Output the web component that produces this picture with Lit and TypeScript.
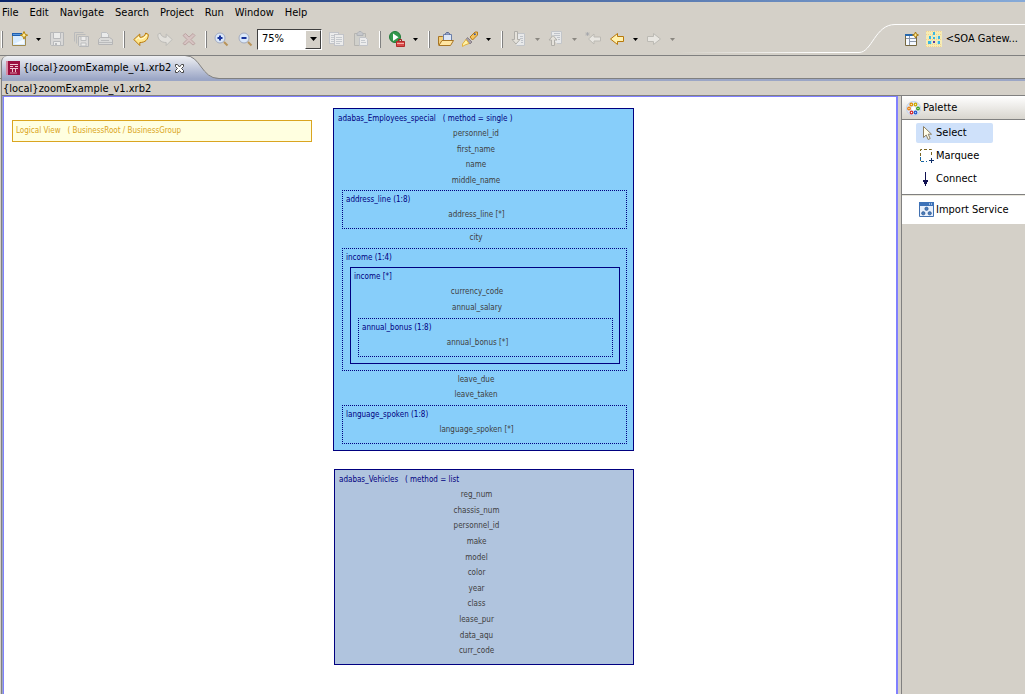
import { LitElement, html, svg, css, nothing, type TemplateResult } from "lit";
import { customElement, property, state } from "lit/decorators.js";
import { classMap } from "lit/directives/class-map.js";

type Tool = {
  kind: "button" | "menu" | "separator" | "tight" | "zoom";
  icon?: string;
  label?: string;
  disabled?: boolean;
};

type Item = string | Group;
type Group = { title: string; solid?: boolean; items: Item[] };

const page = (x: number, y: number) => svg`
  <rect x="${x + 0.5}" y="${y + 0.5}" width="9" height="11" fill="#f1f2f3" stroke="#bfc3ca"/>
  <path d="M${x + 2} ${y + 3.5}h6M${x + 2} ${y + 5.5}h6M${x + 2} ${y + 7.5}h6M${x + 2} ${y + 9.5}h4" stroke="#c3c8d0"/>`;

const ICONS: Record<string, unknown> = {
  new: svg`
    <path d="M.5 3.500h13v11H.5z" fill="#d8ecff" stroke="#a08a50"/>
    <path d="M2 13h10V8z" fill="#f6fbff"/>
    <path d="M0 2h10v3H0z" fill="#1f5fb0"/><path d="M1 3.500h8" stroke="#5b9be0"/>
    <path d="M12 .5l1.200 2.800 2.500.9-2.500.9-1.200 3.100-1.200-3.100-2.500-.9 2.500-.9z" fill="#fff0a0" stroke="#b8860b"/>`,
  save: svg`
    <path d="M1.500 1.500h13v13h-12l-1-1z" fill="#dadada" stroke="#b1b3b6"/>
    <path d="M4.500 1.500h7v6h-7zM4.500 10.500h7v4h-7z" fill="#f0f0f0" stroke="#b5b7ba"/><path d="M6 12h2v2H6z" fill="#b5b7ba"/>`,
  saveAll: svg`
    <path d="M1.500 10.500v-9h9M3.500 12.500v-9h9" fill="none" stroke="#b6b8ba"/>
    <path d="M5.500 5.500h10v10h-9l-1-1z" fill="#dedede" stroke="#b1b3b6"/>
    <path d="M8 5.500h5v4H8zM8 12h5v3H8z" fill="#f2f2f2" stroke="#b8babd"/>`,
  print: svg`
    <path d="M4.500 7.500v-6h5l2 2v4" fill="#eef0f2" stroke="#bbbec2"/>
    <path d="M1.500 8.500l2-2h9l3 2v5h-14z" fill="#dcdcdc" stroke="#b0b1b3"/>
    <path d="M4 9.500h8M2 11.500h13" stroke="#b6b8bb"/>`,
  undo: svg`<path d="M.8 8.500l6-5.500v3.300c3 .2 5-1.300 6-4.300l2.500 1.500c0 5-3 8-8.500 8v3z" fill="#ffe68c" stroke="#b8780a"/><path d="M3 8.500l3-2.500v2c3 .2 6-1 8-4" fill="none" stroke="#fffbdc"/>`,
  redo: svg`<path d="M15.200 8.500l-6-5.500v3.300c-3 .2-5-1.300-6-4.300L.8 3.500c0 5 3 8 8.400 8v3z" fill="#e5e3df" stroke="#b9b8b5"/>`,
  remove: svg`<path d="M2 4.500l2.500-2L8 6l4-3.500L14 4.500 10 8.500l4 4-2 1.500-4-3.500-4 3.500-2-1.500 4-4z" fill="#d7c1c1" stroke="#b99d9d"/>`,
  zoomIn: svg`<circle cx="7" cy="7" r="5" fill="#dbe8f9" stroke="#a3abc0"/><path d="M11 11l3.500 3.500" stroke="#b8935a" stroke-width="2"/><path d="M4.500 7h5M7 4.500v5" stroke="#17339c" stroke-width="2"/>`,
  zoomOut: svg`<circle cx="7" cy="7" r="5" fill="#dbe8f9" stroke="#a3abc0"/><path d="M11 11l3.500 3.500" stroke="#b8935a" stroke-width="2"/><path d="M4.500 7h5" stroke="#17339c" stroke-width="2"/>`,
  copy: svg`${page(0, 1)}${page(5, 3)}`,
  paste: svg`
    <path d="M1.500 2.500h11v12h-11z" fill="#d0d0cc" stroke="#b1b1ad"/><path d="M4 4.500v-2l2-2h2l2 2v2z" fill="#c3c6cc" stroke="#a9adb4"/>
    <path d="M6.500 6.500h6l2 2v6h-8z" fill="#f1f2f3" stroke="#bfc3ca"/><path d="M8 9.500h4M8 11.500h5" stroke="#c3c8d0"/>`,
  run: svg`
    <circle cx="6" cy="6" r="5.500" fill="#33984c" stroke="#207a39"/><path d="M4 2.500v7.500L9.500 6.200z" fill="#fff"/>
    <path d="M9.500 10.500v-2h3v2" fill="none" stroke="#a02020"/><path d="M7.500 10.500h8v5h-8z" fill="#d94a4a" stroke="#b02a2a"/><path d="M8 12.500h7" stroke="#f5b0a8"/>`,
  open: svg`
    <path d="M.5 13.500v-8h4l1 1h6v7z" fill="#f3cf7c" stroke="#a87523"/>
    <path d="M5.500 9V3.500h8V9" fill="#dce6f6" stroke="#6b7ea8"/><path d="M7.500 3.500v-1l1-1h2l1 1v1" fill="#8fa0c8" stroke="#59698e"/>
    <path d="M.8 14.500l3.200-5h11.500l-3 5z" fill="#ffe6a2" stroke="#a87523"/>`,
  torch: svg`
    <path d="M8 6l5-5h2.500v3L10.500 9z" fill="#f5c35c" stroke="#b57a1a"/><circle cx="12.800" cy="3.300" r="1" fill="#3757a5"/>
    <path d="M5.500 6.500l4.500 4.500-2 2L4 8.500z" fill="#a7a0a6" stroke="#888089"/>
    <path d="M4 8.500L.5 13v2.500L3 14l4-1.500z" fill="#fff3a6" stroke="#e0b040"/>`,
  nextMark: svg`
    <path d="M3.500 2.500h10v12h-8" fill="#eceef0" stroke="#c0c4ca"/><path d="M9 5.500h3M9 7.500h3M10 9.500h2M10 11.500h2" stroke="#bcc1ca"/>
    <path d="M3.500.5h3v8H9l-4 4.500L1 8.500h2.500z" fill="#e8e6df" stroke="#aaa9a4"/>`,
  prevMark: svg`
    <path d="M3.500 8V.5h10v12H9" fill="#eceef0" stroke="#c0c4ca"/><path d="M6 2.500h6M6 4.500h6M9 6.500h3M10 8.500h2" stroke="#bcc1ca"/>
    <path d="M3.500 14.500h3V9H9L5 4.500 1 9h2.500z" fill="#e8e6df" stroke="#aaa9a4"/>`,
  lastEdit: svg`
    <path d="M15.500 6v4H9v3L3.500 8 9 3v3z" fill="#ecebe6" stroke="#b8b7b1"/>
    <path d="M2.500 1v4M.5 3h4M1 1.500l3 3M4 1.500l-3 3" stroke="#9a9da6" stroke-width=".7"/>`,
  back: svg`<path d="M14.500 5.500v5h-6v3L1.500 8l7-5.500v3z" fill="#fff1ae" stroke="#b8780a"/>`,
  forward: svg`<path d="M1.500 5.500v5h6v3L14.500 8l-7-5.500v3z" fill="#ecebe6" stroke="#b8b7b1"/>`,
  openPerspective: svg`
    <path d="M2.500 3.500h11v11h-11z" fill="#f5f9ff" stroke="#76673f"/><path d="M2 3h8v2H2z" fill="#2567ad"/>
    <path d="M3 7.500h10M6.500 5v9M7 10.500h6" stroke="#8b97aa"/><path d="M12.500 1l1 2.200 2 .8-2 .8-1 2.200-1-2.200-2-.8 2-.8z" fill="#ffe98a" stroke="#a87a14"/>`,
  soa: svg`
    <path d="M0 0h16v16H0z" fill="#f6ecb4"/><path d="M0 .5h16M0 3.500h16M0 8.500h16M0 13.500h16M0 15.500h16" stroke="#f3d38e" stroke-dasharray="1 1"/>
    <path d="M7 1h2v3H7zM3 5h2v3H3zM7 6h2v2H7zM12 5h2v3h-2zM2 10h3v3H2zM12 10h2v3h-2z" fill="#39b6e2"/><path d="M7 10h2v2H7z" fill="#5b3fa0"/>
    <path d="M6 4h1v2H6zM10 5h1v3h-1zM5 9h1v4H5zM11 10h1v3h-1z" fill="#b5e8e8"/>`,
  file: svg`
    <path d="M0 0h14v14H0z" fill="#9b1140"/><path d="M0 0h2v14H0z" fill="#d78ba2"/>
    <path d="M4 3.500h8M4 5.500h3M9 5.500h3M4 7.500h8M6.500 8v3M9.500 8v3" stroke="#f0c9d3"/><path d="M4 12h7" stroke="#d78ba2"/>`,
  close: svg`<path d="M1.500 1.500h2L5.500 4l2-2.500h2v2L7.500 5.500l2 2v2h-2l-2-2-2 2h-2v-2l2-2-2-2z" fill="#fff" stroke="#444"/>`,
  palette: svg`
    <circle cx="7.500" cy="7.500" r="7" fill="#dfe9f8" stroke="#c0d1ea"/><circle cx="7.500" cy="7.500" r="2" fill="#fff"/>
    <g stroke-width="1.200" fill="#fff6b0"><circle cx="5.300" cy="3.500" r="1.300" stroke="#e08a00"/><circle cx="9.500" cy="3.500" r="1.300" stroke="#c9a800"/>
    <circle cx="12" cy="7.500" r="1.300" stroke="#2a9a20"/><circle cx="9.500" cy="11.500" r="1.300" stroke="#2458c8" fill="#a8d0ff"/>
    <circle cx="5.500" cy="11.500" r="1.300" stroke="#d82a2a" fill="#fff"/><circle cx="3" cy="7.500" r="1.300" stroke="#e87a10"/></g>`,
  select: svg`<path d="M4.500 1.500v11l2.700-2.500 2 4.500 2-1-2-4.300h3.300z" fill="#fffdea" stroke="#8c7f63"/>`,
  marquee: svg`
    <path d="M1.500 13V1.500h11V9" fill="none" stroke="#7a6420" stroke-dasharray="3 2"/><path d="M1.500 9v4.500H8" fill="none" stroke="#1665a5" stroke-dasharray="3 2"/>
    <path d="M12.500 10v5M10 12.500h5" stroke="#10306a"/>`,
  connect: svg`<path d="M6.500 1v9" stroke="#101050"/><path d="M4 9h5v2H8v2H7v2H6v-2H5v-2H4z" fill="#101050"/>`,
  service: svg`
    <path d="M.5.5h14v14H.5z" fill="#e8f0fc" stroke="#4170b0"/><path d="M0 0h15v4H0z" fill="#3d72b8"/><path d="M10 2h1M12 2h1" stroke="#fff"/>
    <g fill="#4b7dbb" stroke="#294f86" stroke-width=".6"><circle cx="7.500" cy="6.800" r="1.700"/><circle cx="4.300" cy="11.300" r="1.700"/><circle cx="10.700" cy="11.300" r="1.700"/></g>`,
};

const icon = (name: string, size = 16): TemplateResult => html`
  <svg width=${size} height=${size} viewBox="0 0 ${size} ${size}" aria-hidden="true">${ICONS[name]}</svg>`;

const sep: Tool = { kind: "separator" };
const btn = (name: string, label: string, disabled = false): Tool => ({ kind: "button", icon: name, label, disabled });
const drop = (label: string, disabled = false): Tool => ({ kind: "menu", label, disabled });

const TOOLS: Tool[] = [
  btn("new", "New"), drop("New options"), btn("save", "Save", true), btn("saveAll", "Save All", true), btn("print", "Print", true), sep,
  btn("undo", "Undo"), btn("redo", "Redo", true), btn("remove", "Delete", true), { kind: "tight" },
  btn("zoomIn", "Zoom In"), btn("zoomOut", "Zoom Out"), { kind: "zoom" }, btn("copy", "Copy", true), btn("paste", "Paste", true), sep,
  btn("run", "External Tools"), drop("External tool options"), sep,
  btn("open", "Open Resource"), btn("torch", "Search"), drop("Search options"), sep,
  btn("nextMark", "Next Annotation", true), drop("Next annotation options", true),
  btn("prevMark", "Previous Annotation", true), drop("Previous annotation options", true),
  btn("lastEdit", "Last Edit Location", true), btn("back", "Back"), drop("Back history"),
  btn("forward", "Forward", true), drop("Forward history", true),
];

const EMPLOYEES: Group = {
  title: "adabas_Employees_special   ( method = single )",
  items: [
    "personnel_id", "first_name", "name", "middle_name",
    { title: "address_line (1:8)", items: ["address_line [*]"] },
    "city",
    {
      title: "income (1:4)",
      items: [{
        title: "income [*]", solid: true,
        items: ["currency_code", "annual_salary", { title: "annual_bonus (1:8)", items: ["annual_bonus [*]"] }],
      }],
    },
    "leave_due", "leave_taken",
    { title: "language_spoken (1:8)", items: ["language_spoken [*]"] },
  ],
};

const VEHICLES: Group = {
  title: "adabas_Vehicles   ( method = list",
  items: ["reg_num", "chassis_num", "personnel_id", "make", "model", "color", "year", "class", "lease_pur", "data_aqu", "curr_code"],
};

const base = css`
  * { box-sizing: border-box; }
  button, select { font: inherit; color: inherit; margin: 0; padding: 0; border: 0; background: none; border-radius: 0; }
  svg { display: block; flex: none; }
`;

@customElement("tool-bar")
class ToolBar extends LitElement {
  static styles = [base, css`
    :host { display: flex; align-items: center; height: 30px; padding-left: 1px; }
    .grip { width: 7px; height: 17px; border-left: 1px solid #fff; box-shadow: inset 1px 0 #808080; }
    .tool { display: grid; place-items: center; width: 24px; height: 24px; }
    .tool:disabled { opacity: 0.85; }
    .drop { display: grid; place-items: center; width: 13px; height: 24px; color: #000; }
    .drop:disabled { color: #8a8780; }
    .sep { width: 12px; height: 17px; padding-left: 6px; }
    .tight { width: 8px; padding-left: 4px; }
    .bar { width: 2px; height: 17px; background: #fff; border-right: 1px solid #808080; }
    .zoom { display: flex; width: 65px; height: 21px; margin-right: 3px; background: #fff; border: 1px solid #404040; border-right-color: #fff; border-bottom-color: #fff; position: relative; }
    .zoom-select { appearance: none; width: 100%; padding: 0 4px; outline: none; }
    .zoom-arrow { position: absolute; right: 0; top: 0; bottom: 0; width: 16px; display: grid; place-items: center; pointer-events: none; background: #d4d0c8; border: 1px solid #fff; border-right-color: #404040; border-bottom-color: #404040; }
  `];

  private tool(t: Tool) {
    switch (t.kind) {
      case "separator": return html`<div class="sep"><div class="bar"></div></div>`;
      case "tight": return html`<div class="sep tight"><div class="bar"></div></div>`;
      case "menu": return html`
        <button class="drop" aria-label=${t.label!} ?disabled=${t.disabled}>
          <svg width="5" height="3" viewBox="0 0 5 3"><path d="M0 0h5L2.500 3z" fill="currentColor"/></svg>
        </button>`;
      case "zoom": return html`
        <div class="zoom">
          <select class="zoom-select" aria-label="Zoom level">
            <option>50%</option><option selected>75%</option><option>100%</option>
          </select>
          <span class="zoom-arrow"><svg width="7" height="4" viewBox="0 0 7 4"><path d="M0 0h7L3.500 4z"/></svg></span>
        </div>`;
      default: return html`<button class="tool" aria-label=${t.label!} ?disabled=${t.disabled}>${icon(t.icon!)}</button>`;
    }
  }

  render() {
    return html`<div class="grip"></div>${TOOLS.map((t) => this.tool(t))}`;
  }
}

@customElement("schema-node")
class SchemaNode extends LitElement {
  @property({ attribute: false }) group!: Group;

  static styles = [base, css`
    :host { display: flex; flex-direction: column; border: 1px solid #000080; font-size: 8px; }
    .title { flex: none; margin: 0; padding: 2px 0 0 4px; font-size: 8px; font-weight: 400; line-height: 15px; height: 17px; color: #000080; white-space: pre; }
    .list { flex: 1; min-height: 0; display: flex; flex-direction: column; margin: 0; padding: 0 0 5px 1px; list-style: none; }
    .field { flex: 0 1 16px; min-height: 0; padding-right: 16px; line-height: 16px; text-align: center; color: #404040; }
    .group { flex: none; margin: 2px 6px 1px 7px; border: 1px dotted #000080; }
    .group .title { height: 16px; padding: 1px 0 0 3px; }
    .group .list { padding-left: 0; }
    .solid { border-style: solid; }
  `];

  private body(g: Group): TemplateResult {
    return html`
      <h3 class="title">${g.title}</h3>
      <ul class="list">
        ${g.items.map((i) => typeof i === "string"
          ? html`<li class="field">${i}</li>`
          : html`<li class=${classMap({ group: true, solid: !!i.solid })}>${this.body(i)}</li>`)}
      </ul>`;
  }

  render() {
    return this.group ? this.body(this.group) : nothing;
  }
}

@customElement("tool-palette")
class ToolPalette extends LitElement {
  @state() private active = "Select";

  static styles = [base, css`
    :host { display: block; background: #d4d0c8; border-left: 1px solid #808080; }
    .head { display: flex; align-items: center; gap: 2px; height: 24px; margin: 0; padding: 1px 0 0 4px; font: inherit; background: linear-gradient(#fff, #d8d5ce); border-bottom: 1px solid #808080; }
    .tools { display: flex; flex-direction: column; align-items: flex-start; gap: 3px; padding: 3px 0 5px 14px; background: #fff; }
    .item { display: flex; align-items: center; gap: 1px; width: 77px; height: 20px; padding-left: 3px; border-radius: 2px; white-space: nowrap; }
    .active { background: #cfe1fa; }
    .drawer { padding: 5px 0 4px 14px; background: #fff; border-top: 1px solid #808080; box-shadow: inset 0 1px #e9e7dc; }
  `];

  private item(name: string, glyph: string) {
    return html`
      <button class=${classMap({ item: true, active: this.active === name })} @click=${() => (this.active = name)}>
        ${icon(glyph)}<span>${name}</span>
      </button>`;
  }

  render() {
    return html`
      <h2 class="head">${icon("palette", 15)}Palette</h2>
      <div class="tools">${this.item("Select", "select")}${this.item("Marquee", "marquee")}${this.item("Connect", "connect")}</div>
      <div class="drawer">${this.item("Import Service", "service")}</div>`;
  }
}

@customElement("app-root")
class AppRoot extends LitElement {
  static styles = [base, css`
    :host { display: flex; flex-direction: column; height: 100vh; overflow: hidden; background: #d4d0c8; color: #000; font: 11px/14px "DejaVu Sans Condensed", "DejaVu Sans", sans-serif; }
    .strip { flex: none; height: 2px; background: linear-gradient(90deg, #0a246a, #86aad8); }
    .menu { flex: none; display: flex; align-items: center; gap: 11px; height: 22px; padding-left: 2px; }
    .tools { flex: none; display: flex; height: 31px; }
    .rule { flex: 1; margin-bottom: 2px; border-bottom: 1px solid; border-image: linear-gradient(90deg, #d4d0c8, #fff 80%) 1; }
    .perspectives { display: flex; align-items: center; gap: 7px; padding: 0 7px 2px 8px; border-top: 1px solid #fff; }
    .perspective { display: flex; align-items: center; gap: 4px; white-space: nowrap; }
    .tabs { flex: none; display: flex; height: 24px; border-top: 1px solid #808080; border-bottom: 1px solid #808080; }
    .tab { display: flex; align-items: center; height: 23px; margin-left: 1px; padding: 1px 0 0 4px; gap: 3px; border-left: 1px solid #808080; border-top-left-radius: 6px; background: linear-gradient(#eff0f3, #9ba6c6); }
    .frame { flex: 1; min-height: 0; display: flex; flex-direction: column; margin-left: 1px; border-left: 1px solid #808080; }
    .accent { flex: none; height: 2px; background: #9ba6c6; }
    .path { flex: none; height: 15px; padding: 1px 0 0 1px; line-height: 13px; border-bottom: 1px solid #808080; }
    .editor { flex: 1; min-height: 0; display: flex; border-left: 1px solid #9ba6c6; }
    .canvas { flex: 1; position: relative; overflow: hidden; background: #fff; border: 1px solid #8080ff; border-width: 1px 2px 0 1px; margin-right: 3px; }
    .palette { flex: none; width: 124px; }
    .node { position: absolute; width: 301px; }
    .logical { left: 8px; top: 23px; width: 300px; height: 22px; padding-left: 3px; border: 1px solid #daa520; background: #ffffe0; color: #daa520; font-size: 8px; line-height: 20px; white-space: pre; }
    .employees { left: 329px; top: 11px; height: 343px; background: #87cefa; }
    .vehicles { left: 330px; top: 372px; width: 300px; height: 196px; background: #b0c4de; }
  `];

  render() {
    return html`
      <div class="strip"></div>
      <nav class="menu">
        ${["File", "Edit", "Navigate", "Search", "Project", "Run", "Window", "Help"].map((m) => html`<button>${m}</button>`)}
      </nav>
      <div class="tools">
        <tool-bar></tool-bar>
        <div class="rule"></div>
        <svg width="36" height="31" viewBox="0 0 36 31" fill="none" aria-hidden="true">
          <path d="M0 28.500C13 28.500 16 .5 36 .5" stroke="#fff"/>
        </svg>
        <div class="perspectives">
          <button aria-label="Open Perspective">${icon("openPerspective")}</button>
          <button class="perspective">${icon("soa")}&lt;SOA Gatew...</button>
        </div>
      </div>
      <div class="tabs">
        <div class="tab">
          ${icon("file", 14)}<span>{local}zoomExample_v1.xrb2</span>
          <button aria-label="Close">${icon("close", 11)}</button>
        </div>
        <svg width="34" height="23" viewBox="0 0 34 23" aria-hidden="true">
          <defs><linearGradient id="tab" x2="0" y2="1"><stop stop-color="#eff0f3"/><stop offset="1" stop-color="#9ba6c6"/></linearGradient></defs>
          <path d="M0 0C16 0 16 22.500 34 22.500V23H0z" fill="url(#tab)"/>
          <path d="M0-.5C16-.5 16 22.500 34 22.500" fill="none" stroke="#808080"/>
        </svg>
      </div>
      <div class="frame">
        <div class="accent"></div>
        <div class="path">{local}zoomExample_v1.xrb2</div>
        <div class="editor">
          <main class="canvas">
            <div class="node logical">${"Logical View   ( BusinessRoot / BusinessGroup"}</div>
            <schema-node class="node employees" .group=${EMPLOYEES}></schema-node>
            <schema-node class="node vehicles" .group=${VEHICLES}></schema-node>
          </main>
          <tool-palette class="palette"></tool-palette>
        </div>
      </div>`;
  }
}
